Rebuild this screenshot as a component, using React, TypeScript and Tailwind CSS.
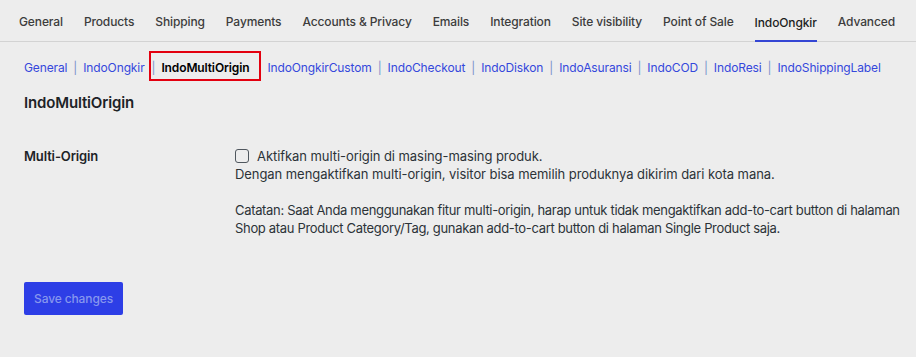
import { Fragment } from 'react';

const tabs = [
  'General',
  'Products',
  'Shipping',
  'Payments',
  'Accounts & Privacy',
  'Emails',
  'Integration',
  'Site visibility',
  'Point of Sale',
  'IndoOngkir',
  'Advanced',
];

const afterBox = [
  'IndoOngkirCustom',
  'IndoCheckout',
  'IndoDiskon',
  'IndoAsuransi',
  'IndoCOD',
  'IndoResi',
  'IndoShippingLabel',
];

function Sep() {
  return <span className="mx-[6px] pt-1 text-[#7a93cc]">|</span>;
}

export default function App() {
  return (
    <div className="min-h-screen bg-[#ededed] font-['Inter',sans-serif] text-[#1d2327]">
      {/* Main settings tabs */}
      <nav className="flex h-[42px] gap-[21px] border-b border-[#d3d3d3] pl-[19px]">
        {tabs.map((tab) => (
          <a
            key={tab}
            className={
              tab === 'IndoOngkir'
                ? '-mb-px flex items-center whitespace-nowrap border-b-2 border-[#3446d4] pt-[5px] text-[12px] font-medium tracking-[-0.01em] text-[#1e1e1e]'
                : 'flex items-center whitespace-nowrap pt-[3px] text-[12px] font-medium tracking-[-0.01em] text-[#3c3c3c]'
            }
          >
            {tab}
          </a>
        ))}
      </nav>

      {/* Sub sections */}
      <div className="mt-[9px] flex h-[30px] items-center whitespace-nowrap pl-6 text-[12px] tracking-[-0.01em] text-[#3548dc]">
        <a className="pt-1">General</a>
        <Sep />
        <a className="pt-1">IndoOngkir</a>
        <span className="ml-[4px] flex h-[30px] items-center border-2 border-[#e3000f] pr-[10px]">
          <span className="ml-px pt-1 text-[#7a93cc]">|</span>
          <span className="ml-[6px] pt-1 font-semibold text-black">IndoMultiOrigin</span>
        </span>
        {afterBox.map((item, i) => (
          <Fragment key={item}>
            {i > 0 && <Sep />}
            <a className={i === 0 ? 'ml-[6px] pt-1' : 'pt-1'}>{item}</a>
          </Fragment>
        ))}
      </div>

      <h2 className="mt-3 pl-6 text-[15px] font-semibold leading-5 tracking-[-0.01em]">IndoMultiOrigin</h2>

      <div className="mt-[34px] flex pl-6">
        <div className="w-[211px] shrink-0 text-[13px] font-semibold leading-[18px] tracking-[-0.01em]">Multi-Origin</div>
        <div className="whitespace-nowrap text-[13px] leading-[18px] tracking-[-0.005em] text-[#2c3338]">
          <label className="flex items-center gap-2">
            <span className="h-[14px] w-[14px] rounded-[3px] border border-[#50575e] bg-transparent" />
            Aktifkan multi-origin di masing-masing produk.
          </label>
          <p>Dengan mengaktifkan multi-origin, visitor bisa memilih produknya dikirim dari kota mana.</p>
          <p className="mt-[18px] tracking-[-0.025em]">
            Catatan: Saat Anda menggunakan fitur multi-origin, harap untuk tidak mengaktifkan add-to-cart button di halaman
            <br />
            Shop atau Product Category/Tag, gunakan add-to-cart button di halaman Single Product saja.
          </p>
        </div>
      </div>

      <div className="mt-[45px] pl-6">
        <button className="h-[33px] w-[99px] rounded-[2px] bg-[#2d3ee6] text-[12px] font-medium tracking-[-0.01em] text-[#8797ee]">
          Save changes
        </button>
      </div>
    </div>
  );
}
